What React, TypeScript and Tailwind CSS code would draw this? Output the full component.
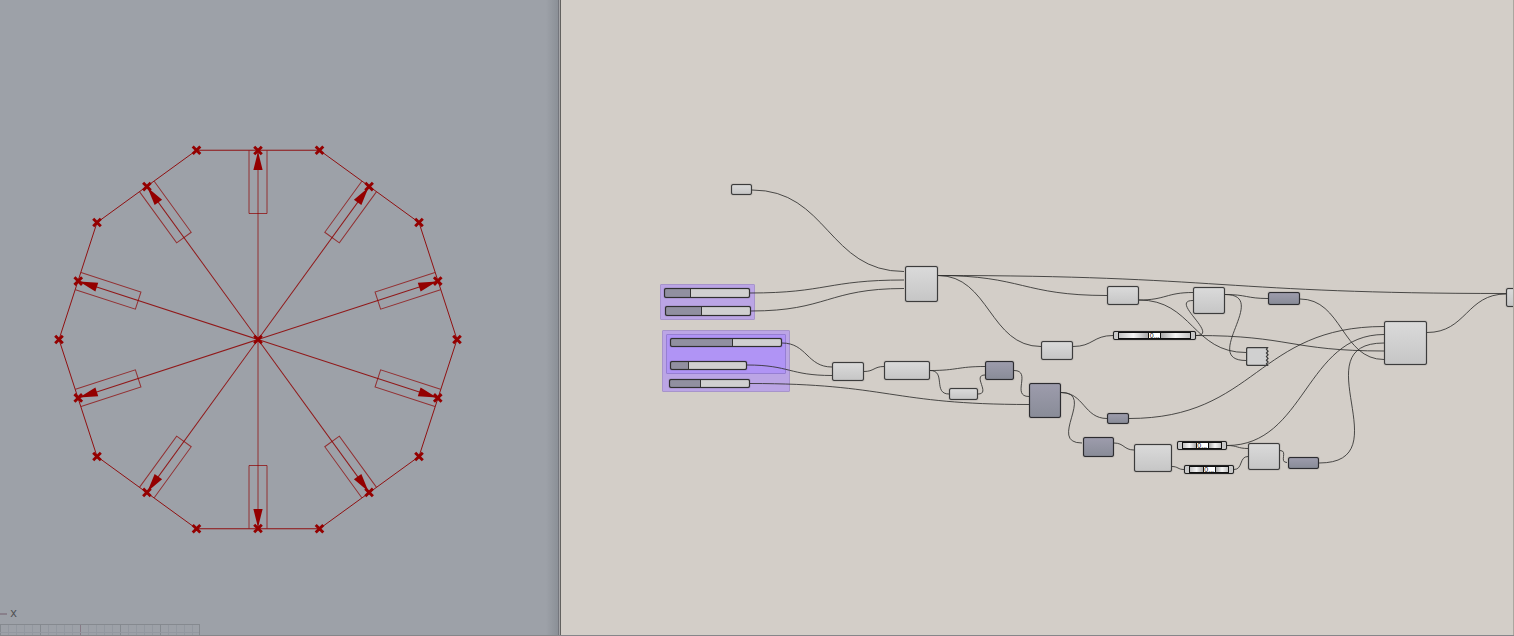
import React from "react";

type Tone = "light" | "dark";
type Box = { id: string; x: number; y: number; w: number; h: number };
type NodeBox = Box & { tone: Tone };
type Slider = Box & { value: number };
type Wire = [number, number, number, number];

const nodes: NodeBox[] = [
  { id: "plane", x: 170, y: 184, w: 21, h: 11, tone: "light" },
  { id: "polygon", x: 344, y: 266, w: 33, h: 36, tone: "light" },
  { id: "add", x: 271, y: 362, w: 32, h: 19, tone: "light" },
  { id: "range", x: 323, y: 361, w: 46, h: 19, tone: "light" },
  { id: "number", x: 388, y: 388, w: 29, h: 12, tone: "light" },
  { id: "domain", x: 424, y: 361, w: 29, h: 19, tone: "dark" },
  { id: "rectangle", x: 468, y: 383, w: 32, h: 35, tone: "dark" },
  { id: "area", x: 480, y: 341, w: 32, h: 19, tone: "light" },
  { id: "explode", x: 546, y: 286, w: 32, h: 19, tone: "light" },
  { id: "evaluate", x: 632, y: 287, w: 32, h: 27, tone: "light" },
  { id: "point", x: 707, y: 292, w: 32, h: 13, tone: "dark" },
  { id: "curve", x: 546, y: 413, w: 22, h: 11, tone: "dark" },
  { id: "edges", x: 522, y: 437, w: 31, h: 20, tone: "dark" },
  { id: "list", x: 573, y: 444, w: 38, h: 28, tone: "light" },
  { id: "vector", x: 687, y: 443, w: 32, h: 27, tone: "light" },
  { id: "direction", x: 727, y: 457, w: 31, h: 12, tone: "dark" },
  { id: "orient", x: 823, y: 321, w: 43, h: 44, tone: "light" },
  { id: "output", x: 945, y: 288, w: 32, h: 19, tone: "light" },
];

const sliders: Slider[] = [
  { id: "radius", x: 103, y: 288, w: 86, h: 10, value: 31 },
  { id: "segments", x: 104, y: 306, w: 86, h: 10, value: 43 },
  { id: "width", x: 109, y: 338, w: 112, h: 9, value: 56 },
  { id: "offset", x: 109, y: 361, w: 77, h: 9, value: 24 },
  { id: "height", x: 108, y: 379, w: 81, h: 9, value: 39 },
];

const scrollers: Box[] = [
  { id: "parameter", x: 552, y: 331, w: 83, h: 9 },
  { id: "index a", x: 616, y: 441, w: 50, h: 9 },
  { id: "index b", x: 623, y: 465, w: 50, h: 9 },
];

const wires: Wire[] = [
  [191, 190, 343, 271.5],
  [189, 293, 343, 280],
  [190, 311, 343, 288.5],
  [221, 343, 271, 367],
  [186, 365, 271, 375.5],
  [189, 383.5, 468, 404.5],
  [303, 371.5, 323, 366.5],
  [369, 370.5, 424, 366.5],
  [369, 370.5, 388, 394],
  [417, 394, 424, 375],
  [453, 370.5, 468, 396.5],
  [377, 275.5, 945, 293.5],
  [377, 275.5, 546, 295.5],
  [377, 275.5, 480, 346.5],
  [500, 392.5, 546, 418.5],
  [500, 392.5, 521, 443],
  [512, 346.5, 552, 335.5],
  [578, 300, 632, 292.5],
  [578, 300, 685, 352.5],
  [635, 335.5, 632, 300.5],
  [635, 335.5, 823, 351],
  [664, 294.5, 707, 298.5],
  [664, 294.5, 685, 360.5],
  [739, 299, 823, 359.5],
  [568, 418.5, 823, 326.5],
  [553, 443, 573, 450],
  [611, 466.5, 623, 469.5],
  [666, 445.5, 687, 448.5],
  [666, 445.5, 823, 334.5],
  [673, 469.5, 687, 456.5],
  [719, 450.5, 726, 462.5],
  [758, 463, 823, 343],
  [866, 332.5, 945, 294],
];

function wirePath([x1, y1, x2, y2]: Wire) {
  const reach = Math.max((x2 - x1) / 2, Math.abs(y2 - y1) * 0.7);
  return `M${x1} ${y1}C${x1 + reach} ${y1} ${x2 - reach} ${y2} ${x2} ${y2}`;
}

const place = (b: Box) => ({ left: b.x, top: b.y, width: b.w, height: b.h });

const CX = 258;
const CY = 339.5;
const RADIUS = 199;
const APOTHEM = 189;
const tenths = Array.from({ length: 10 }, (_, i) => i);

function polar(r: number, degrees: number): [number, number] {
  const a = (degrees * Math.PI) / 180;
  return [CX + r * Math.cos(a), CY - r * Math.sin(a)];
}

function Mark({ at }: { at: [number, number] }) {
  const [x, y] = at;
  return (
    <path
      d={`M${x - 3.8} ${y - 3.8}L${x + 3.8} ${y + 3.8}M${x + 3.8} ${y - 3.8}L${x - 3.8} ${y + 3.8}`}
      stroke="#940000"
      strokeWidth={2.9}
    />
  );
}

function Viewport() {
  const corners = tenths.map((i) => polar(RADIUS, i * 36));
  return (
    <section
      aria-label="Model viewport"
      className="flex w-[calc(37%+1px)] shrink-0 flex-col overflow-hidden border-r border-[#62615f] bg-[#9da1a8]"
    >
      <div className="flex min-h-0 flex-1 flex-col border-r border-[#a5a5a8]">
        <div className="flex min-h-0 flex-1 flex-col border-r border-[#74767d] bg-linear-to-l from-[#8b9097] to-transparent bg-[length:12px_100%] bg-right bg-no-repeat">
          <svg className="min-h-0 w-full flex-1" fill="none">
            <g stroke="#8e0000" strokeWidth={1}>
              <polygon points={corners.map((p) => p.join(",")).join(" ")} opacity={0.9} />
              {tenths.map((i) => (
                <g key={i} transform={`translate(${CX} ${CY}) rotate(${i * 36})`}>
                  <path d={`M0 0V${-APOTHEM}`} opacity={i % 5 === 0 ? 0.7 : 0.85} />
                  <path
                    d={`M-9 ${-APOTHEM}V${-APOTHEM + 63}H9V${-APOTHEM}`}
                    opacity={0.7}
                  />
                  <path d={`M0 ${-APOTHEM + 1}L4.6 -169.5H-4.6Z`} fill="#940000" stroke="none" />
                </g>
              ))}
            </g>
            {corners.map((p, i) => (
              <Mark key={i} at={p} />
            ))}
            {tenths.map((i) => (
              <Mark key={i} at={polar(APOTHEM, 18 + i * 36)} />
            ))}
            <Mark at={[CX, CY]} />
          </svg>
          <div className="flex h-5 items-center gap-[3px] font-['Liberation_Mono',monospace] text-xs leading-3 text-[#4f5052]">
            <span className="h-0.5 w-[7px] bg-[#89808b]" />
            <span>x</span>
          </div>
          <svg className="h-[11px] w-[201px]" fill="none" shapeRendering="crispEdges">
            {Array.from({ length: 25 }, (_, i) => (
              <path
                key={i}
                d={`M${i * 8 + 0.5} 0V12`}
                stroke={i === 10 ? "#877a86" : i % 5 === 0 ? "#858a90" : "#9398a0"}
              />
            ))}
            <path d="M0 8.5H199" stroke="#9398a0" />
            <path d="M0 .5H199.500V12" stroke="#85898f" />
          </svg>
        </div>
      </div>
    </section>
  );
}

function NodeCard({ node }: { node: NodeBox }) {
  return (
    <div
      style={place(node)}
      className={
        node.tone === "light"
          ? "absolute rounded-xs border border-[#3c3c3c] bg-linear-to-b from-[#dadada] to-[#c6c6c6] shadow-[0_0_1px_#444,inset_0_0_1px_#444]"
          : "absolute rounded-xs border border-[#2c2c30] bg-linear-to-b from-[#9d9cac] to-[#898c98] shadow-[0_0_1px_#333,inset_0_0_1px_#333]"
      }
    />
  );
}

function NumberSlider({ slider }: { slider: Slider }) {
  const [value, setValue] = React.useState(slider.value);
  return (
    <input
      type="range"
      aria-label={slider.id}
      value={value}
      onChange={(e) => setValue(Number(e.target.value))}
      style={{
        ...place(slider),
        backgroundImage: `linear-gradient(to right, #9190a0 calc(${value}% - 1px), #333 calc(${value}% - 1px), #333 ${value}%, transparent ${value}%)`,
      }}
      className="absolute m-0 appearance-none rounded-xs border border-[#303030] bg-[#d0d0d0] shadow-[0_0_1px_#222,inset_0_0_1px_#333] [&::-webkit-slider-thumb]:h-2 [&::-webkit-slider-thumb]:w-1 [&::-webkit-slider-thumb]:appearance-none"
    />
  );
}

function DigitScroller({ box }: { box: Box }) {
  return (
    <div
      style={place(box)}
      className="absolute flex rounded-xs border border-[#222] bg-[#c9c9c9] px-1 shadow-[0_0_1px_#333]"
    >
      <div className="flex min-w-0 flex-1 border-x border-[#111] bg-[#111] py-px">
        <span className="flex-1 bg-linear-to-r from-[#c4c4c4] via-[#f4f4f4] to-[#aaa]" />
        <input
          type="text"
          aria-label={box.id}
          defaultValue="0..."
          className="-my-px w-[13px] border border-[#111] bg-white p-0 text-center font-['Liberation_Sans',sans-serif] text-[7px] leading-none text-[#111]"
        />
        <span className="flex-1 bg-linear-to-r from-[#aaa] via-[#f4f4f4] to-[#c4c4c4]" />
      </div>
    </div>
  );
}

function Canvas() {
  return (
    <section
      aria-label="Definition canvas"
      className="relative min-w-0 flex-1 overflow-hidden border-r border-[#aaa69f] bg-[#d3cec8]"
    >
      <div className="absolute top-[284px] left-[99px] h-9 w-[95px] rounded-[1px] border border-[#a794cb] bg-[#bba5e5]" />
      <div className="absolute top-[330px] left-[101px] h-[62px] w-[128px] rounded-[1px] border border-[#a794cb] bg-[#bba5e5]" />
      <div className="absolute top-[334px] left-[105px] h-10 w-[120px] rounded-[1px] border border-[#967fd2] bg-[#b094f5]" />
      <svg className="absolute inset-0 h-full w-full" fill="none" stroke="#30302f" strokeOpacity={0.85}>
        {wires.map((w, i) => (
          <path key={i} d={wirePath(w)} />
        ))}
      </svg>
      {nodes.map((n) => (
        <NodeCard key={n.id} node={n} />
      ))}
      <svg
        className="absolute top-[347px] left-[685px] h-[19px] w-[23px]"
        viewBox="0 0 23 19"
        fill="#d0d0d0"
      >
        <path
          d="M21.500 .6H2Q.6 .6 .6 2V17Q.6 18.400 2 18.400H21.500L20.500 16.800L22 15L20.500 13.200L22 11.400L20.500 9.600L22 7.800L20.500 6L22 4.200L20.500 2.400Z"
          stroke="#3c3c3c"
          strokeWidth={1.3}
        />
      </svg>
      {sliders.map((s) => (
        <NumberSlider key={s.id} slider={s} />
      ))}
      {scrollers.map((s) => (
        <DigitScroller key={s.id} box={s} />
      ))}
    </section>
  );
}

export default function App() {
  return (
    <main className="flex h-screen overflow-hidden border-b border-[#85868a] bg-[#d3cec8]">
      <Viewport />
      <Canvas />
    </main>
  );
}
